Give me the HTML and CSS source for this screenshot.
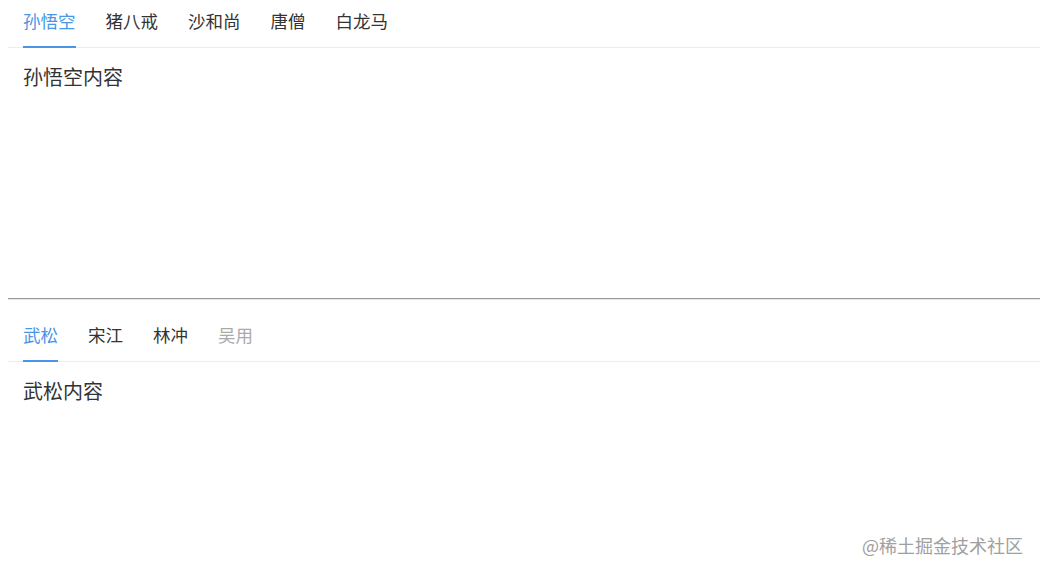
FILE: index.html
```html
<!DOCTYPE html>
<html lang="zh-CN">
<head>
    <meta charset="UTF-8">
    <title>Tabs</title>
    <link rel="stylesheet" href="styles.css">
</head>
<body>
    <div class="tabs first">
        <div class="tab-nav">
            <span class="tab active">孙悟空</span>
            <span class="tab">猪八戒</span>
            <span class="tab">沙和尚</span>
            <span class="tab">唐僧</span>
            <span class="tab">白龙马</span>
        </div>
        <div class="tab-pane">孙悟空内容</div>
    </div>
    <hr>
    <div class="tabs second">
        <div class="tab-nav">
            <span class="tab active">武松</span>
            <span class="tab">宋江</span>
            <span class="tab">林冲</span>
            <span class="tab disabled">吴用</span>
        </div>
        <div class="tab-pane">武松内容</div>
    </div>
    <div class="watermark">@稀土掘金技术社区</div>
</body>
</html>
```

FILE: styles.css
```css
body {
    margin: 0 0 0 8px;
    font-family: "Noto Sans CJK SC", "Noto Sans", sans-serif;
    color: #333;
    background: #fff;
}

.tab-nav {
    display: flex;
    height: 47px;
    border-bottom: 1px solid #ececec;
}

.tab {
    position: relative;
    padding: 0 15px;
    font-size: 17.5px;
    line-height: 42px;
    cursor: pointer;
}

.tab.active {
    color: #4a95e6;
}

.tab.active::after {
    content: "";
    position: absolute;
    left: 15px;
    right: 15px;
    bottom: -1px;
    height: 2px;
    background: #4a95e6;
}

.tab.disabled {
    color: #aaa;
}

.tab-pane {
    padding: 14px 15px;
    font-size: 20px;
    line-height: 30px;
}

.first .tab-pane {
    height: 214px;
}

hr {
    margin: 8px 0 0;
    border: 0;
    border-top: 1px solid #9a9a9a;
    border-bottom: 1px solid #e6e6e6;
}

.second {
    margin-top: 14px;
}

.watermark {
    position: absolute;
    right: 17px;
    bottom: 14px;
    font-size: 18px;
    color: #a0a0a0;
}
```
